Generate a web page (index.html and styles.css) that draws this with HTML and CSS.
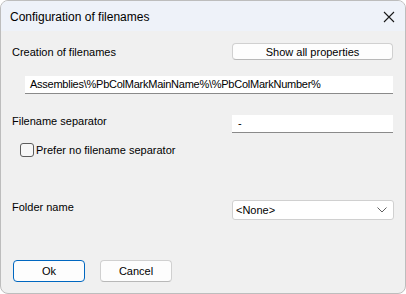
FILE: index.html
```html
<!DOCTYPE html>
<html lang="en">
<head>
    <meta charset="UTF-8">
    <title>Configuration of filenames</title>
    <link rel="stylesheet" href="styles.css">
</head>
<body>
    <div class="dialog">
        <div class="titlebar">
            <span class="title">Configuration of filenames</span>
            <svg class="close" width="12" height="12" viewBox="0 0 12 12">
                <path d="M1 1L11 11M11 1L1 11" stroke="#1a1a1a" stroke-width="1.1" fill="none"/>
            </svg>
        </div>
        <div class="content">
            <div class="row row-creation">
                <span class="label">Creation of filenames</span>
                <button class="btn btn-wide">Show all properties</button>
            </div>
            <div class="row row-pattern">
                <div class="field field-long">Assemblies\%PbColMarkMainName%\%PbColMarkNumber%</div>
            </div>
            <div class="row row-sep">
                <span class="label label-up">Filename separator</span>
                <div class="field field-short">-</div>
            </div>
            <div class="row row-check">
                <span class="checkbox"></span>
                <span class="label">Prefer no filename separator</span>
            </div>
            <div class="row row-folder">
                <span class="label label-up">Folder name</span>
                <div class="select">
                    <span>&lt;None&gt;</span>
                    <svg width="10" height="6" viewBox="0 0 10 6">
                        <path d="M0.5 0.5L5 5L9.5 0.5" stroke="#606060" stroke-width="1" fill="none"/>
                    </svg>
                </div>
            </div>
            <div class="row row-buttons">
                <button class="btn btn-small btn-default">Ok</button>
                <button class="btn btn-small">Cancel</button>
            </div>
        </div>
    </div>
</body>
</html>
```

FILE: styles.css
```css
html, body {
    margin: 0;
    padding: 0;
    background: #ffffff;
}
body {
    font-family: 'Liberation Sans', Arial, sans-serif;
    font-size: 11px;
    color: #000000;
}
.dialog {
    width: 404px;
    height: 292px;
    border: 1px solid #bdbdbd;
    border-radius: 8px;
    overflow: hidden;
    background-color: #f0f0f0;
    display: flex;
    flex-direction: column;
}
.titlebar {
    height: 30px;
    background-color: #eef2f9;
    display: flex;
    align-items: center;
    justify-content: space-between;
    padding: 0 9px 0 9px;
}
.title {
    font-size: 12px;
    color: #000000;
    padding-top: 1px;
}
.close {
    margin-right: 1px;
    margin-top: 1px;
}
.content {
    flex: 1;
    padding: 0 12px 0 11px;
    display: flex;
    flex-direction: column;
}
.row {
    display: flex;
    align-items: center;
}
.label {
    flex: 1;
}
.label-up {
    padding-bottom: 6px;
}
.row-creation {
    margin-top: 12px;
    height: 17px;
}
.row-pattern {
    margin-top: 16px;
    padding-left: 13px;
}
.row-sep {
    margin-top: 21px;
}
.row-check {
    margin-top: 10px;
    padding-left: 8px;
}
.row-folder {
    margin-top: 43px;
}
.row-buttons {
    margin-top: 40px;
    padding-left: 1px;
    gap: 15px;
}
.btn {
    font-family: 'Liberation Sans', Arial, sans-serif;
    font-size: 11px;
    color: #000000;
    background-color: #fdfdfd;
    border: 1px solid #d0d0d0;
    border-bottom-color: #b8b8b8;
    border-radius: 4px;
    padding: 0;
}
.btn-wide {
    width: 161px;
    height: 17px;
}
.btn-small {
    width: 72px;
    height: 22px;
}
.btn-default {
    border: 1px solid #0067c0;
}
.field {
    background-color: #ffffff;
    border-bottom: 1px solid #8a8a8a;
    height: 18px;
    line-height: 17px;
    box-sizing: border-box;
    padding-left: 5px;
}
.field-long {
    flex: 1;
    letter-spacing: -0.25px;
}
.field-short {
    width: 161px;
    height: 18px;
    padding-left: 6px;
}
.checkbox {
    width: 12px;
    height: 12px;
    border: 1px solid #5c5c5c;
    border-radius: 3px;
    background-color: #f7f7f7;
    margin-right: 2px;
}
.select {
    width: 162px;
    height: 20px;
    background-color: #ffffff;
    border: 1px solid #d0d0d0;
    border-radius: 3px;
    display: flex;
    align-items: center;
    justify-content: space-between;
    padding: 0 6px 0 3px;
    box-sizing: border-box;
    margin-right: -1px;
}
```
